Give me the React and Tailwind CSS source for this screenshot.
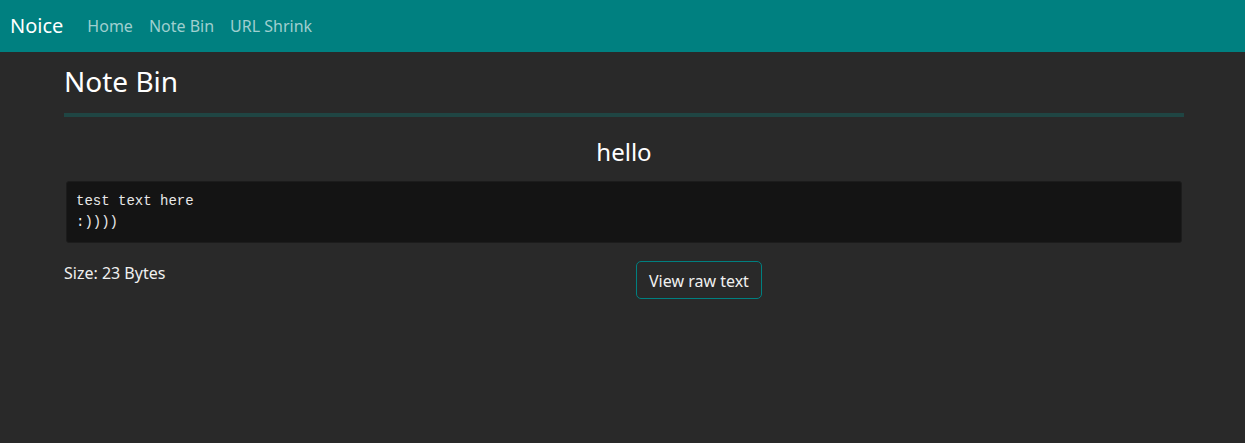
export default function App() {
  const font = { fontFamily: '"Noto Sans", "Open Sans", sans-serif' };
  return (
    <div className="min-h-[443px] bg-[#292929] text-[#f0f0f0]" style={font}>
      <nav className="h-[52px] bg-[#008080] flex items-center px-[10px]">
        <span className="text-[20px] text-white mr-[24px] leading-none">Noice</span>
        <div className="flex gap-[16px] text-[16px] text-[#9fcfcf] leading-none">
          <span>Home</span>
          <span>Note Bin</span>
          <span>URL Shrink</span>
        </div>
      </nav>
      <div className="w-[1120px] ml-[64px]">
        <h3 className="text-[28px] leading-[34px] mt-[12px] text-white">Note Bin</h3>
        <div className="h-[4px] bg-[#1f4543] mt-[15px]"></div>
        <h4 className="text-[24px] leading-[30px] text-center mt-[20px] text-white">hello</h4>
        <div className="mx-[2px] mt-[14px] bg-[#141414] border border-[#1c1c1c] rounded-[3px] pl-[9px] pr-[10px] py-[9px]">
          <pre className="text-[14px] leading-[21px] text-[#e8e8e8]" style={{ fontFamily: '"Liberation Mono", monospace' }}>
{`test text here
:))))`}
          </pre>
        </div>
        <div className="flex items-start mt-[18px]">
          <div className="w-[572px] text-[16px] leading-[24px] text-[#f0f0f0]">Size: 23 Bytes</div>
          <button className="border border-[#008080] rounded-[5px] px-[12px] pt-[1px] h-[38px] text-[16px] text-[#f0f0f0]">
            View raw text
          </button>
        </div>
      </div>
    </div>
  );
}
